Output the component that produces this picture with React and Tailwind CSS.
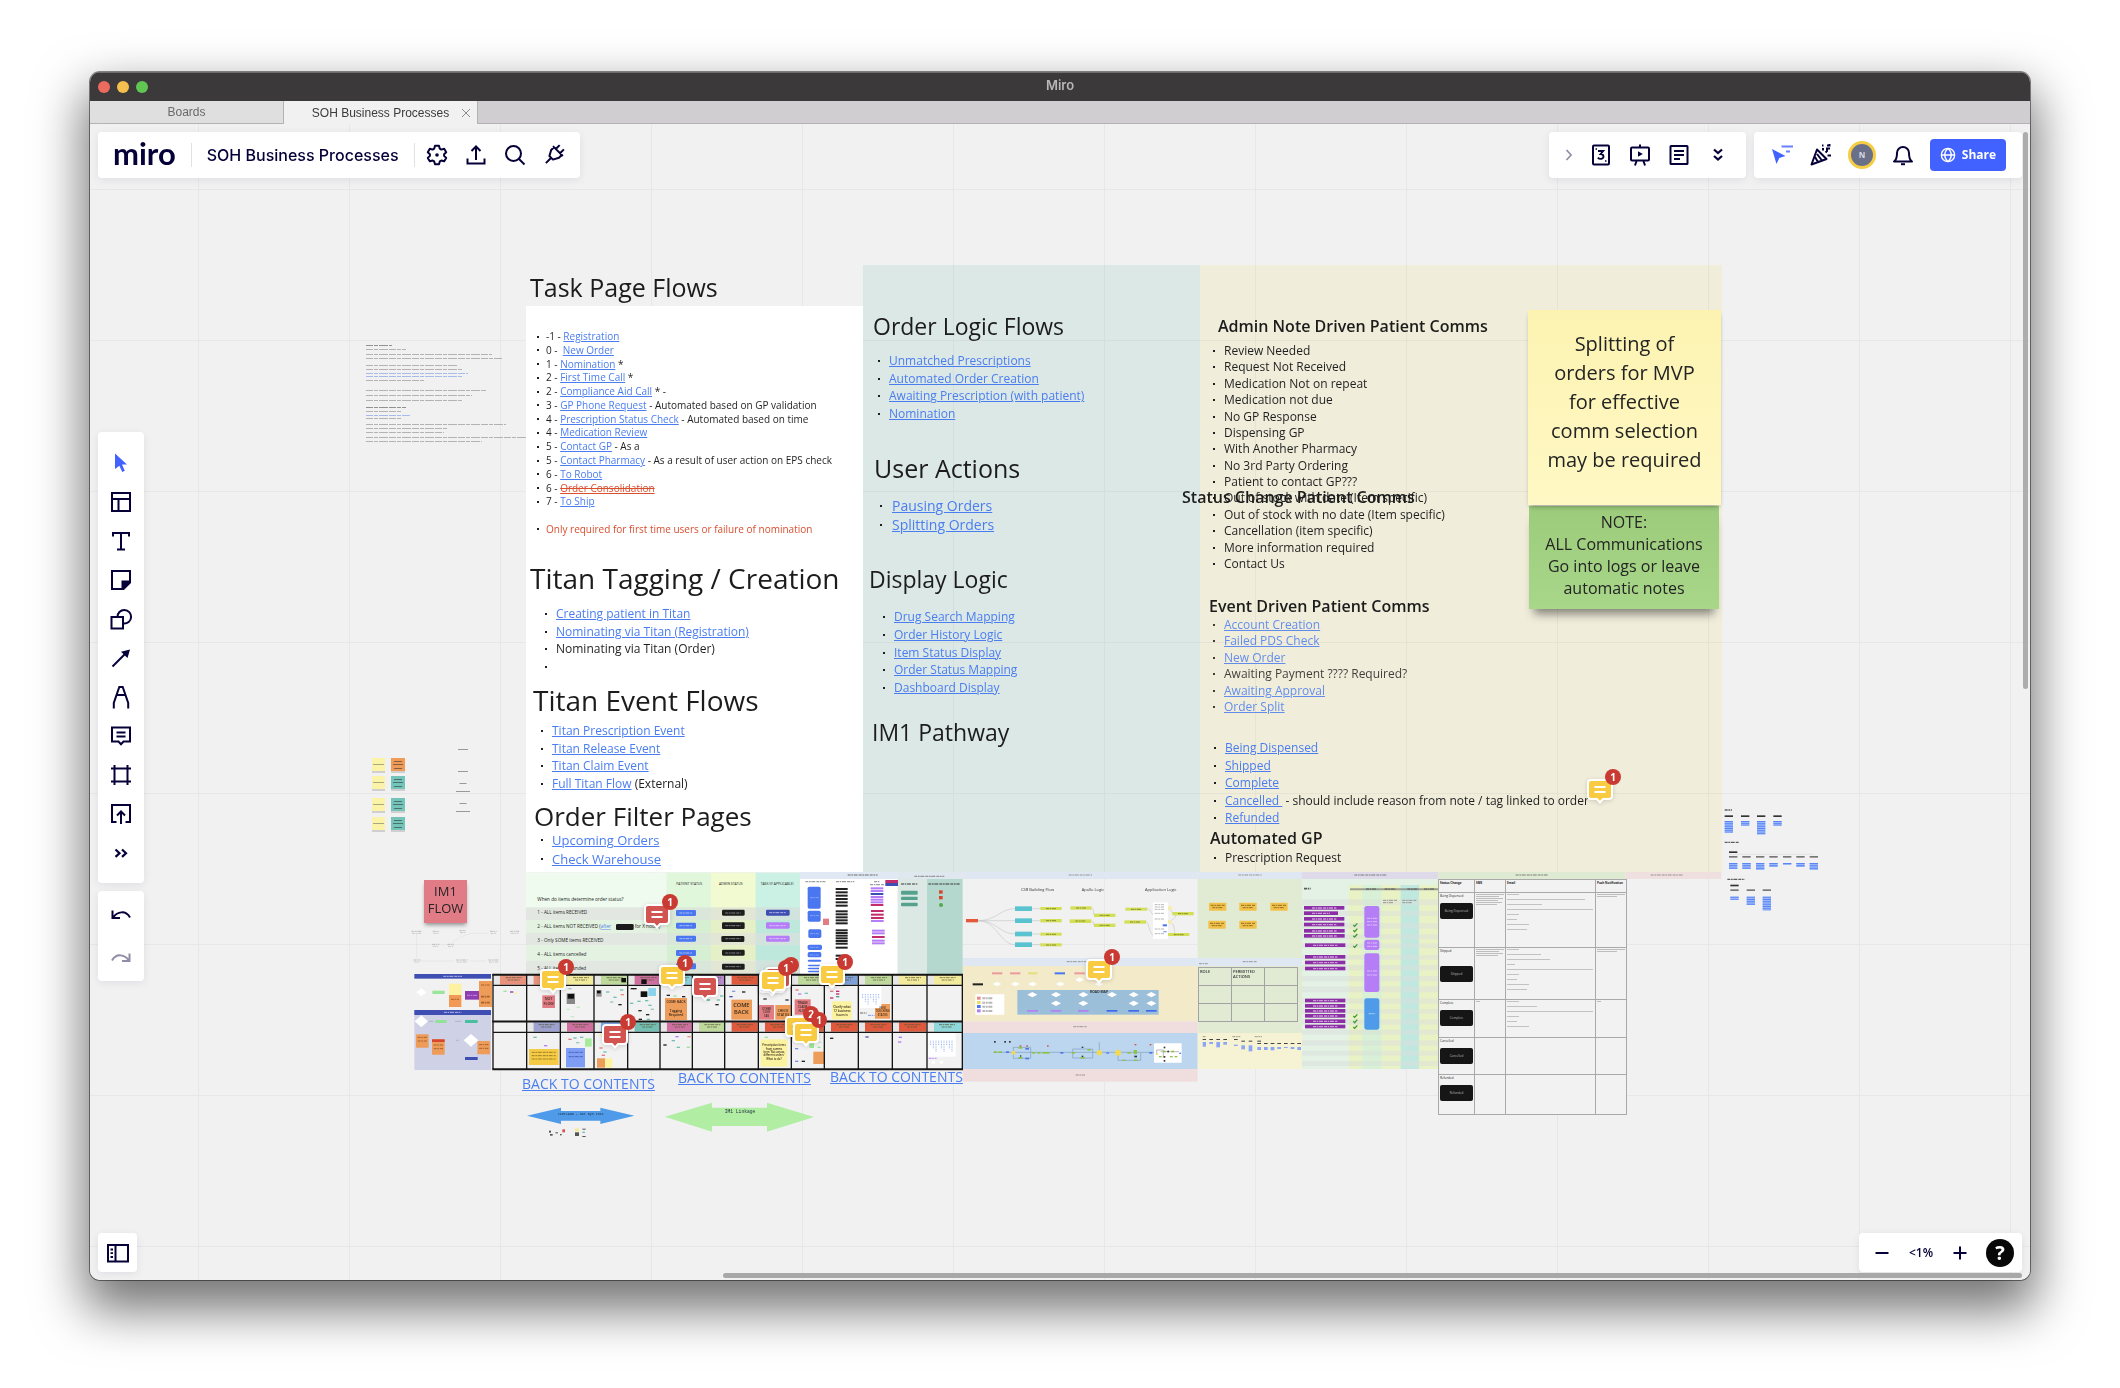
import React from "react";

/* Board space is measured from the top left of the screen; the canvas starts at ORIGIN. */
const ORIGIN = { x: 90, y: 124 };
const at = (x, y, w, h) => ({ left: x - ORIGIN.x, top: y - ORIGIN.y, width: w, height: h });

/* ---------- icons ---------- */
function Icon({ size = "size-6", children, ...rest }) {
  return (
    <svg viewBox="0 0 24 24" className={size} fill="none" stroke="currentColor" strokeWidth="2" aria-hidden="true" {...rest}>
      {children}
    </svg>
  );
}
const Gear = () => (
  <Icon>
    <path strokeLinejoin="round" d="M10 2.800h4l.8 2.900 1.500.9 2.900-.8 2 3.400-2.100 2v1.700l2.100 2-2 3.400-2.900-.8-1.500.9-.8 2.900h-4l-.8-2.900-1.500-.9-2.900.8-2-3.400 2.100-2v-1.700l-2.100-2 2-3.400 2.900.8 1.500-.9z" />
    <circle cx="12" cy="12" r="1.800" fill="currentColor" stroke="none" />
  </Icon>
);
const Export = () => (
  <Icon>
    <path d="M3.500 15.500v5h17v-5M12 17V4M7.500 8 12 3.500 16.500 8" />
  </Icon>
);
const Search = () => (
  <Icon>
    <circle cx="10.500" cy="10.500" r="7.500" />
    <path d="m16 16 5.500 5.500" />
  </Icon>
);
const Plug = () => (
  <Icon>
    <path transform="rotate(45 12 12)" d="M9 1v5.500M15 1v5.500M5 6.500h14M6.500 6.500v4l3 5.500h5l3-5.500v-4M12 16v7.500" strokeLinejoin="round" />
  </Icon>
);
const Chevron = () => (
  <Icon size="size-5"><path d="m9 6 5.500 6L9 18" /></Icon>
);
const Estimate = () => (
  <Icon>
    <rect x="4" y="2.500" width="16" height="19" rx="1" />
    <path strokeWidth="1.800" d="M9 8h5.200l-2.700 3.200c2 0 3 1 3 2.400 0 2.300-3.800 3.200-5.700 1" />
    <path strokeWidth="1.500" d="M6.500 6h1.500M16 18h1.500" />
  </Icon>
);
const Present = () => (
  <Icon>
    <rect x="3" y="4.500" width="18" height="13" rx="1" />
    <path d="M12 1.500v3M8.500 18 7 22.500M15.500 18l1.500 4.500" />
    <path d="m10 8.300 4.800 2.700L10 13.700z" fill="currentColor" stroke="none" />
  </Icon>
);
const Note = () => (
  <Icon>
    <rect x="3.500" y="3" width="17" height="18" rx=".5" />
    <path d="M7 8h10M7 12h10M7 16h6" />
  </Icon>
);
const DoubleDown = () => (
  <Icon><path strokeWidth="2.200" d="m8 6.500 4 3.500 4-3.500M8 13l4 3.500 4-3.500" /></Icon>
);
const CursorLines = () => (
  <Icon>
    <path d="m2 6 13.500 7-6.200 2L6.500 21z" fill="currentColor" stroke="none" />
    <path strokeWidth="1.800" opacity=".8" d="M11.500 3.500H23M16 8.500h4" />
  </Icon>
);
const Party = () => (
  <Icon>
    <path strokeLinejoin="round" d="M8 6.500 17.500 16 2.500 21.500zM8 11l5 6.500M6 14l3 5" />
    <path d="M14 7.500V5M16.500 9.500 18 8V5.500h3M18.500 12.500H22M18 2.500h2.500V1M13 2.500h1.500" />
  </Icon>
);
const Bell = () => (
  <Icon>
    <path strokeLinejoin="round" d="M3 18.500h18c-2.500-1.500-3-3.500-3-8.500a6 6 0 0 0-12 0c0 5-.5 7-3 8.500z" />
    <path d="M10 21.200h4" />
  </Icon>
);
const Globe = () => (
  <Icon size="size-[16px]">
    <circle cx="12" cy="12" r="10" />
    <path d="M2 12h20M12 2c-6.500 6-6.500 14 0 20M12 2c6.500 6 6.500 14 0 20" />
  </Icon>
);
const Cursor = () => (
  <Icon><path d="m6 2.500 12 11h-5l2.800 6.200-2.600 1.300-2.800-6.300-4.400 3.300z" fill="currentColor" stroke="none" /></Icon>
);
const Templates = () => (
  <Icon><path d="M3 3h18v18H3zM3 9h18M9.500 9v12" /></Icon>
);
const TextTool = () => (
  <Icon><path d="M4 7.500V4h16v3.500M12 4v16.500M8 20.500h8" /></Icon>
);
const Sticky = () => (
  <Icon>
    <path d="M3 3h18v10.500L14 21H3z" />
    <path d="M13.500 13.500H21v1L14.500 21h-1z" fill="currentColor" />
  </Icon>
);
const Shapes = () => (
  <Icon>
    <rect x="2.500" y="10" width="11.500" height="11.500" />
    <path d="M8.500 10a6.800 6.800 0 1 1 6 6.500" />
  </Icon>
);
const Arrow = () => (
  <Icon>
    <path d="M3.500 20.500 17 7" />
    <path d="M21 3.500 18.500 12 12 5.800z" fill="currentColor" stroke="none" />
  </Icon>
);
const Pen = () => (
  <Icon><path d="M4.800 23.500v-5.500L10.300 2h3.400l5.500 16v5.500M8 10h8" /></Icon>
);
const Comment = () => (
  <Icon><path d="M3 3.500h18v14h-6.500L12 20.200 9.500 17.500H3zM7.500 8.500h9M7.500 12.500h9" /></Icon>
);
const Frame = () => (
  <Icon><path d="M2 5.500h20M2 18.500h20M5.500 2v20M18.500 2v20" /></Icon>
);
const Upload = () => (
  <Icon><path d="M7.500 20H3V3h18v17h-4.500M12 22V10M8 13.500l4-4 4 4" /></Icon>
);
const More = () => (
  <Icon><path strokeWidth="2.200" d="m6.500 8.500 4 3.700-4 3.700M13 8.500l4 3.700-4 3.700" /></Icon>
);
const Undo = () => (
  <Icon>
    <path d="M3.500 7.500V15H11M4.500 14C8 9 16.500 6.500 21 14.500" />
  </Icon>
);
const Redo = () => (
  <Icon>
    <path d="M20.500 7.500V15H13M19.500 14C16 9 7.500 6.500 3 14.500" />
  </Icon>
);
const PanelIcon = () => (
  <Icon>
    <path d="M2 4h20v16.500H2zM9.500 4v16.500" />
    <path strokeWidth="1.800" d="M4.500 8.500h2.500M4.500 12.200h2.500M4.500 16h2.500" />
  </Icon>
);

function ToolButton({ label, className = "", children }) {
  return (
    <button type="button" aria-label={label} className={"flex items-center justify-center " + className}>
      {children}
    </button>
  );
}

/* ---------- board text ---------- */
const HEADINGS = [
  { text: "Task Page Flows", x: 530, y: 270, cls: "text-[25px]" },
  { text: "Titan Tagging / Creation", x: 530, y: 561, cls: "text-[28px]" },
  { text: "Titan Event Flows", x: 533, y: 683, cls: "text-[28px]" },
  { text: "Order Filter Pages", x: 534, y: 799, cls: "text-[26px]" },
  { text: "Order Logic Flows", x: 873, y: 309, cls: "text-[23px]" },
  { text: "User Actions", x: 874, y: 451, cls: "text-[25px]" },
  { text: "Display Logic", x: 869, y: 562, cls: "text-[23px]" },
  { text: "IM1 Pathway", x: 872, y: 715, cls: "text-[23px]" },
];
const SUBHEADINGS = [
  { text: "Admin Note Driven Patient Comms", x: 1218, y: 316 },
  { text: "Status Change Patient Comms", x: 1182, y: 487 },
  { text: "Event Driven Patient Comms", x: 1209, y: 596 },
  { text: "Automated GP", x: 1210, y: 828 },
];

const S10 = "text-[10px] leading-[13px]";
const S12 = "text-[12px] leading-[16px]";
/* Each row is [text before, link text, text after]; null leaves a blank row. */
const LISTS = [
  {
    x: 537, y: 330, h: 206, cls: S10, gap: "gap-[7px]",
    rows: [
      ["-1 - ", "Registration"], ["0 -  ", "New Order"], ["1 - ", "Nomination", " *"], ["2 - ", "First Time Call", " *"],
      ["2 - ", "Compliance Aid Call", " * -"], ["3 - ", "GP Phone Request", " - Automated based on GP validation"],
      ["4 - ", "Prescription Status Check", " - Automated based on time"], ["4 - ", "Medication Review"],
      ["5 - ", "Contact GP", " - As a"], ["5 - ", "Contact Pharmacy", " - As a result of user action on EPS check"],
      ["6 - ", "To Robot"], { struck: "Order Consolidation", before: "6 - " }, ["7 - ", "To Ship"], null,
      { warn: "Only required for first time users or failure of nomination" },
    ],
  },
  {
    x: 545, y: 606, h: 69, cls: S12, gap: "gap-[9px]",
    rows: [["", "Creating patient in Titan"], ["", "Nominating via Titan (Registration)"], ["Nominating via Titan (Order)"], [""]],
  },
  {
    x: 541, y: 723, h: 69, cls: S12, gap: "gap-[9px]",
    rows: [["", "Titan Prescription Event"], ["", "Titan Release Event"], ["", "Titan Claim Event"], ["", "Full Titan Flow", " (External)"]],
  },
  { x: 541, y: 831, h: 37, cls: "text-[13px] leading-[18px]", gap: "gap-[9px]", rows: [["", "Upcoming Orders"], ["", "Check Warehouse"]] },
  {
    x: 878, y: 353, h: 69, cls: S12, gap: "gap-[9px]",
    rows: [["", "Unmatched Prescriptions"], ["", "Automated Order Creation"], ["", "Awaiting Prescription (with patient)"], ["", "Nomination"]],
  },
  { x: 880, y: 496, h: 38, cls: "text-[14px] leading-[19px]", gap: "gap-[10px]", rows: [["", "Pausing Orders"], ["", "Splitting Orders"]] },
  {
    x: 883, y: 609, h: 87, cls: S12, gap: "gap-[9px]",
    rows: [["", "Drug Search Mapping"], ["", "Order History Logic"], ["", "Item Status Display"], ["", "Order Status Mapping"], ["", "Dashboard Display"]],
  },
  {
    x: 1213, y: 343, h: 229, cls: S12, gap: "gap-[9px]",
    rows: [
      ["Review Needed"], ["Request Not Received"], ["Medication Not on repeat"], ["Medication not due"], ["No GP Response"],
      ["Dispensing GP"], ["With Another Pharmacy"], ["No 3rd Party Ordering"], ["Patient to contact GP???"],
      ["Out of stock with date (Item specific)"], ["Out of stock with no date (Item specific)"],
      ["Cancellation (item specific)"], ["More information required"], ["Contact Us"],
    ],
  },
  {
    x: 1213, y: 617, h: 98, cls: S12, gap: "gap-[9px]", soft: true,
    rows: [["", "Account Creation"], ["", "Failed PDS Check"], ["", "New Order"], ["Awaiting Payment ???? Required?"], ["", "Awaiting Approval"], ["", "Order Split"]],
  },
  {
    x: 1214, y: 740, h: 86, cls: S12, gap: "gap-[9px]",
    rows: [["", "Being Dispensed"], ["", "Shipped"], ["", "Complete"], ["", "Cancelled ", " - should include reason from note / tag linked to order"], ["", "Refunded"]],
  },
  { x: 1214, y: 850, h: 16, cls: S12, gap: "gap-[9px]", rows: [["Prescription Request"]] },
];

function Row({ row }) {
  if (row.struck)
    return (
      <span>
        {row.before}
        <a href="#order-consolidation" className="text-[#da4f2e] underline decoration-1">
          <s>{row.struck}</s>
        </a>
      </span>
    );
  if (row.warn) return <span className="text-[#da4f2e]">{row.warn}</span>;
  return (
    <span>
      {row[0]}
      {row[1] && <a href="#link" className="text-[#4a7df0] underline decoration-1">{row[1]}</a>}
      {row[2]}
    </span>
  );
}

function BoardList({ list }) {
  return (
    <ul
      className={"absolute flex flex-col justify-between whitespace-pre text-[#1f1f1f] " + list.cls + (list.soft ? " opacity-85" : "")}
      style={{ ...at(list.x, list.y), height: list.h }}
    >
      {list.rows.map((row, i) =>
        row === null ? (
          <li key={i} aria-hidden="true">&nbsp;</li>
        ) : (
          <li key={i} className={"flex items-center " + list.gap}>
            <span className="size-[2px] shrink-0 bg-[#1f1f1f]" />
            <Row row={row} />
            {row[0] === "" && !row[1] ? <span>&nbsp;</span> : null}
          </li>
        )
      )}
    </ul>
  );
}

/* ---------- miniature drawings ---------- */
const R = (x, y, w, h, fill, rx = 0) => <rect key={x + "-" + y + fill} x={x} y={y} width={w} height={h} fill={fill} rx={rx} />;
const Bars = ({ items, fill, rx = 0 }) => items.map(([x, y, w, h], i) => <rect key={i} x={x} y={y} width={w} height={h} fill={fill} rx={rx} />);
/* Text too small to read, shown as a dotted stroke. */
const Scribble = ({ x, y, w, color = "#777", t = 3 }) => (
  <path d={"M" + x + " " + y + "h" + w} stroke={color} strokeWidth={t} strokeDasharray="9 2 5 2 12 3" opacity=".7" />
);
const Diamond = ({ x, y, w = 20, h = 18 }) => <path d={`M${x - w} ${y}L${x} ${y - h}L${x + w} ${y}L${x} ${y + h}z`} fill="#fff" />;

const COLS = [279, 380, 481, 582, 683, 780, 877, 974, 1075, 1174, 1273, 1375, 1477, 1581, 1687];
const TOP_HEADS = ["#e8917d", "#e8917d", "#f3eb9c", "#bfd99c", "#cf6fa0", "#8bd3dc", "#b78acb", "#e0593c", "#cf6fa0", "#bfd99c", "#7da0d8", "#bfd99c", "#f3eb9c", "#f3eb9c"];
const LOW_HEADS = [null, "#9ca1d0", "#cf6fa0", "#7fa4e8", "#74bfb4", "#cf6fa0", "#bfd99c", "#e0593c", "#e0593c", "#e0593c", "#e0593c", "#e0593c", "#e0593c", "#8ed8dc"];

function LeftMaps() {
  return (
    <g>
      {[[34, 217, 32], [98, 217, 20], [178, 215, 20], [270, 217, 20], [330, 217, 28], [96, 256, 22], [142, 256, 20], [40, 303, 22], [168, 303, 36], [265, 303, 32]].map(([x, y, w]) => (
        <g key={x + "" + y}>
          <Scribble x={x} y={y - 3} w={w} color="#aaa" />
          <Scribble x={x + 2} y={y + 3} w={w - 4} color="#bbb" />
        </g>
      ))}
      <path d="M50 222v78M60 303h100M210 303h50M155 250q20-20 60-30h50" stroke="#e2e2e2" strokeWidth="2" fill="none" />
      {R(43, 342, 230, 14, "#3f4eb3")}
      <Scribble x={130} y={349} w={56} color="#dfe3ff" />
      <Diamond x={64} y={397} w={15} h={12} />
      {R(97, 392, 37, 10, "#9be59a")}{R(147, 371, 37, 34, "#fdf2a2")}{R(147, 405, 37, 36, "#f29a55")}
      {R(195, 393, 43, 26, "#8e3db2")}{R(237, 363, 39, 78, "#ee9c5a")}
      <Scribble x={201} y={406} w={30} color="#d9a9ee" />
      <Scribble x={243} y={375} w={26} color="#8c4a1c" /><Scribble x={243} y={410} w={26} color="#8c4a1c" t={5} /><Scribble x={243} y={428} w={26} color="#8c4a1c" t={5} />
      <Scribble x={153} y={418} w={24} color="#8c4a1c" />
      {R(43, 450, 230, 180, "#cfd2e7")}{R(43, 450, 230, 15, "#3f4eb3")}
      <Scribble x={132} y={457} w={52} color="#dfe3ff" />
      <Diamond x={64} y={484} /><Diamond x={213} y={541} w={22} h={19} />
      {R(106, 480, 34, 9, "#93e09a")}{R(195, 480, 38, 9, "#49bfa0")}
      {R(48, 523, 38, 40, "#ee9c5a", 2)}{R(96, 538, 38, 46, "#ee9c5a", 2)}{R(96, 538, 38, 8, "#d8452f")}{R(232, 543, 38, 40, "#ee9c5a", 2)}
      {[[53, 532], [53, 543], [101, 555], [101, 566], [237, 554], [237, 565]].map(([x, y]) => <Scribble key={x + "" + y} x={x} y={y} w={28} color="#8c4a1c" />)}
      {R(195, 591, 38, 9, "#3f4eb3")}
      <path d="M86 484h14M165 484h20M168 541h8" stroke="#9aa" strokeWidth="2" />
    </g>
  );
}

function StatusTable() {
  const rows = [142, 180, 219, 256, 302];
  const hs = [38, 39, 37, 46, 40];
  return (
    <g>
      {R(378, 38, 422, 304, "#eefbee")}{R(800, 38, 133, 304, "#e0f7dc")}{R(933, 38, 135, 304, "#f1fad0")}{R(1067, 38, 134, 304, "#caf1e4")}
      {rows.map((y, i) => (
        <g key={y}>
          {R(378, y, 422, hs[i], i % 2 ? "#e4f2e2" : "#e2e8e1")}
          {R(800, y, 133, hs[i], i % 2 ? "#d6efd3" : "#dbe6da")}
          {R(933, y, 135, hs[i], i % 2 ? "#e6f0c6" : "#e2e7d5")}
          {R(1067, y, 134, hs[i], i % 2 ? "#bfe8dc" : "#d2e3de")}
        </g>
      ))}
      <g fontFamily="Open Sans, sans-serif" fontSize="14" fill="#222">
        <text x="412" y="122">When do items determine order status?</text>
        <text x="412" y="163">1 - ALL items RECEIVED</text>
        <text x="412" y="205">2 - ALL items NOT RECEIVED (<tspan fill="#4a7df0" textDecoration="underline">after</tspan></text>
        <text x="704" y="205">for X hours)</text>
        <text x="412" y="247">3 - Only SOME items RECEIVED</text>
        <text x="412" y="289">4 - ALL items cancelled</text>
        <text x="412" y="330">5 - ALL items refunded</text>
        <text x="829" y="74" fontSize="10">PATIENT STATUS</text>
        <text x="957" y="74" fontSize="10">ADMIN STATUS</text>
        <text x="1082" y="74" fontSize="10">TASK (IF APPLICABLE)</text>
      </g>
      {R(648, 192, 53, 18, "#1b1b1b", 4)}
      <Bars rx={4} fill="#4a76f0" items={[[828, 150, 60, 18], [828, 188, 60, 18], [828, 227, 60, 18], [828, 270, 60, 18], [828, 310, 60, 18]]} />
      <Bars rx={4} fill="#1d1d1d" items={[[966, 149, 68, 18], [966, 187, 68, 20], [964, 228, 69, 18], [966, 269, 68, 18], [966, 311, 68, 18]]} />
      {R(1098, 149, 71, 18, "#3f4eb3", 4)}{R(1098, 187, 71, 19, "#b57df6", 4)}{R(1098, 227, 71, 18, "#b57df6", 4)}
      {[159, 197, 236, 279, 320].map((y) => (
        <g key={y}><Scribble x={838} y={y} w={38} color="#cfdcff" /><Scribble x={976} y={y} w={46} color="#aaa" /></g>
      ))}
      {[158, 197, 236].map((y) => <Scribble key={y} x={1108} y={y} w={50} color="#ecdcff" />)}
    </g>
  );
}

const seq = (a, b, s) => Array.from({ length: Math.floor((b - a) / s) + 1 }, (_, i) => a + i * s);

function OrderMapping() {
  return (
    <g transform="translate(840 0)">
      {R(360, 38, 293, 304, "#ffffff")}{R(360, 36, 293, 21, "#dfe8f3")}
      {R(653, 38, 88, 304, "#dbe8e3")}{R(741, 57, 107, 285, "#b4d8cd")}{R(653, 36, 195, 21, "#dfe8ee")}
      <Scribble x={503} y={45} w={90} t={4} /><Scribble x={703} y={49} w={90} t={4} />
      <Scribble x={376} y={65} w={60} t={4} /><Scribble x={468} y={65} w={55} t={4} /><Scribble x={582} y={65} w={18} t={4} /><Scribble x={570} y={74} w={42} t={4} />
      <Scribble x={663} y={72} w={50} t={5} color="#444" /><Scribble x={745} y={72} w={94} t={5} color="#444" />
      {R(616, 60, 38, 9, "#c22c6c")}{R(616, 69, 38, 9, "#3f4eb3")}
      <Bars rx={5} fill="#4a76f0" items={[[383, 80, 39, 66], [383, 152, 39, 33], [385, 208, 39, 26], [383, 254, 43, 16], [383, 276, 41, 16], [383, 299, 41, 6], [383, 314, 41, 5], [383, 323, 41, 5], [383, 332, 41, 5]]} />
      {[113, 167, 221, 262, 285].map((y) => <Scribble key={y} x={390} y={y} w={26} color="#9db5ff" />)}
      {R(429, 176, 18, 19, "#e17b84")}
      <Bars fill="#222" items={[...seq(84, 134, 10), 151, 160, 169, 178, 187, ...seq(208, 248, 8), 260, 284, 294].map((y) => [467, y, 36, 6])} />
      {[[572, 82, "#b57df6"], [572, 90, "#b57df6"], [572, 99, "#3f4eb3"], [572, 108, "#b57df6"], [572, 116, "#b57df6"], [572, 124, "#b57df6"], [572, 132, "#c22c6c"], [573, 150, "#c22c6c"], [573, 161, "#c22c6c"], [573, 171, "#c22c6c"], [573, 180, "#b57df6"], [576, 209, "#b57df6"], [576, 217, "#b57df6"], [576, 228, "#c22c6c"], [576, 239, "#b57df6"], [576, 247, "#b57df6"]].map(([x, y, c]) => R(x, y, 38, 6, c))}
      <Bars rx={3} fill="#57a28f" items={[[663, 92, 50, 12], [663, 110, 50, 10], [663, 128, 50, 11]]} />
      {R(777, 91, 11, 10, "#d8452f")}{R(777, 108, 11, 10, "#d8452f")}<circle cx="783" cy="135" r="6" fill="#54a84e" />
    </g>
  );
}

function StoryGrid() {
  return (
    <g>
      {R(279, 343, 1408, 285, "#f2f2f2")}
      {TOP_HEADS.map((c, i) => (
        <g key={i}>
          {R(COLS[i] + 20, 345, COLS[i + 1] - COLS[i] - 22, 29, c)}
          {R(COLS[i] + 2, 345, 18, 29, "#e6e6e6")}
          <Scribble x={COLS[i] + 38} y={353} w={48} color="#553" /><Scribble x={COLS[i] + 44} y={360} w={36} color="#553" />
        </g>
      ))}
      {LOW_HEADS.map((c, i) =>
        c ? (
          <g key={i}>
            {R(COLS[i] + 20, 487, COLS[i + 1] - COLS[i] - 22, 28, c)}
            {R(COLS[i] + 2, 487, 18, 28, "#e6e6e6")}
            <Scribble x={COLS[i] + 36} y={494} w={48} color="#553" /><Scribble x={COLS[i] + 44} y={501} w={30} color="#553" />
          </g>
        ) : null
      )}
      {/* small diagrams inside each cell */}
      {[[310, 392, "#9be59a"], [330, 394, "#8e3db2"], [342, 397, "#fdf2a2"], [500, 446, "#c8e8c8"], [530, 440, "#c8e8c8"], [505, 384, "#9ec6c0"], [512, 468, "#c8e8c8"], [618, 394, "#74bfb4"], [640, 410, "#74bfb4"], [660, 388, "#74bfb4"], [662, 402, "#e8917d"], [630, 424, "#9ec6c0"], [655, 432, "#222"], [692, 384, "#222"], [700, 384, "#222"], [690, 428, "#74bfb4"], [712, 422, "#74bfb4"], [735, 420, "#74bfb4"], [745, 434, "#74bfb4"], [715, 450, "#222"], [738, 462, "#222"], [752, 446, "#9ec6c0"], [716, 476, "#222"], [740, 476, "#74bfb4"], [800, 404, "#222"], [820, 406, "#9be59a"], [846, 408, "#222"], [920, 418, "#49a77e"], [950, 418, "#74bfb4"], [946, 432, "#222"], [960, 406, "#74bfb4"], [988, 408, "#3f4eb3"], [996, 392, "#8aa0dd"], [1026, 394, "#222"], [1090, 415, "#333"], [1156, 418, "#333"], [1186, 388, "#e17b84"], [1194, 400, "#b57df6"], [1214, 398, "#7dc4b8"], [1290, 392, "#e17b84"], [1308, 392, "#c22c6c"], [1308, 400, "#c22c6c"], [1308, 408, "#4aa08f"], [1290, 412, "#c22c6c"], [400, 530, "#74bfb4"], [432, 555, "#b57df6"], [505, 536, "#e17b84"], [520, 532, "#74bfb4"], [540, 530, "#74bfb4"], [528, 546, "#9ec6c0"], [596, 524, "#fdf2a2"], [598, 562, "#e17b84"], [610, 574, "#74bfb4"], [605, 584, "#e17b84"], [790, 553, "#222"], [815, 540, "#74bfb4"], [826, 528, "#b57df6"], [830, 560, "#74bfb4"], [862, 528, "#e8917d"], [860, 560, "#9be59a"], [1094, 530, "#9be59a"], [1290, 533, "#222"], [1396, 529, "#55a"], [1496, 530, "#b57df6"], [1494, 544, "#b57df6"], [1185, 564, "#7b8fe0"], [1185, 602, "#7b8fe0"], [1205, 602, "#222"], [1252, 560, "#9be59a"], [1255, 545, "#c8e8c8"]].map(([x, y, c]) => R(x, y, 10, 4, c))}
      {R(427, 406, 38, 38, "#e17b84")}{R(500, 400, 25, 32, "#888")}{R(503, 402, 19, 14, "#111")}{R(589, 390, 16, 20, "#999")}{R(591, 392, 11, 8, "#111")}
      {R(722, 394, 20, 17, "#111")}{R(745, 384, 23, 24, "#8bd3ea")}{R(664, 354, 14, 13, "#111")}{R(724, 358, 16, 14, "#111")}
      {R(795, 414, 66, 66, "#ee9c5a")}{R(994, 419, 62, 60, "#ee9c5a")}{R(1077, 435, 45, 44, "#e17b84")}{R(1126, 435, 46, 44, "#ee9c5a")}
      {R(1184, 418, 48, 46, "#e17b84")}{R(1296, 424, 59, 54, "#fbf3a0")}{R(1425, 432, 45, 44, "#ee9c5a")}
      {R(387, 567, 89, 48, "#f5cb46")}{R(498, 564, 57, 58, "#7f9df4")}{R(555, 535, 20, 25, "#a6eb9c")}{R(591, 595, 24, 28, "#ee9c5a")}{R(615, 595, 22, 28, "#fbf3a0")}
      {R(1082, 538, 80, 82, "#fbf3a0")}{R(1240, 575, 32, 37, "#ee9c5a")}{R(1228, 550, 14, 14, "#9be59a")}
      {R(1380, 378, 64, 66, "#fff")}{R(1583, 520, 84, 70, "#fff")}
      {seq(1388, 1436, 8).map((x, i) => <path key={x} d={`M${x} 402v${14 + (i % 3) * 9}`} stroke="#9bb5ee" strokeWidth="3" strokeDasharray="3 2" />)}
      {seq(1592, 1656, 8).map((x, i) => <path key={x} d={`M${x} 542v${14 + (i % 3) * 10}`} stroke="#9bb5ee" strokeWidth="3" strokeDasharray="3 2" />)}
      <Scribble x={1380} y={459} w={20} color="#333" /><Scribble x={1404} y={466} w={20} color="#4a76f0" /><Scribble x={1586} y={595} w={24} color="#b57df6" t={4} />
      <Diamond x={1600} y={607} w={7} h={6} /><Diamond x={1624} y={607} w={7} h={6} />
      <g fontFamily="Open Sans, sans-serif" fontWeight="600" textAnchor="middle" fill="#3a2a1a">
        <text x="446" y="420" fontSize="11">NOT</text><text x="446" y="435" fontSize="11">FLOW</text>
        <text x="828" y="430" fontSize="10">COME BACK</text><text x="828" y="456" fontSize="10">Tagging</text><text x="828" y="468" fontSize="10">Required</text>
        <text x="1024" y="442" fontSize="17">COME</text><text x="1024" y="463" fontSize="17">BACK</text>
        <text x="1100" y="449" fontSize="8">OTHER</text><text x="1100" y="460" fontSize="8">CLICK</text><text x="1100" y="471" fontSize="8">TAG</text>
        <text x="1149" y="455" fontSize="10">CHECK</text><text x="1149" y="468" fontSize="10">STATUS</text>
        <text x="1208" y="431" fontSize="9">TRIAGE</text><text x="1208" y="444" fontSize="9">CLAIM</text><text x="1208" y="457" fontSize="9">FLOW</text>
        <text x="1326" y="443" fontSize="9">Clarify what</text><text x="1326" y="455" fontSize="9">12 business</text><text x="1326" y="467" fontSize="9">hours is</text>
        <text x="1448" y="446" fontSize="8">FEED</text><text x="1448" y="457" fontSize="8">TOUCHING</text><text x="1448" y="468" fontSize="8">STATUS</text>
        <text x="1122" y="559" fontSize="8">Prescription items</text><text x="1122" y="569" fontSize="8">from comms</text><text x="1122" y="579" fontSize="8">item 'Not across</text><text x="1122" y="589" fontSize="8">different orders'</text><text x="1122" y="601" fontSize="8">What to do?</text>
      </g>
      {[577, 587, 597].map((y) => <Scribble key={y} x={395} y={y} w={72} color="#7a6112" />)}
      {[577, 590].map((y) => <Scribble key={y} x={506} y={y} w={42} color="#34479d" />)}
      <g stroke="#151515" fill="none">
        {COLS.map((x) => <path key={x} d={`M${x} 343V628`} strokeWidth="4" />)}
        <path d="M277 344H1689M277 484.500H1689" strokeWidth="6" />
        <path d="M279 376H1687M279 517H1687" strokeWidth="4" />
        <path d="M277 628H1689" strokeWidth="6" />
      </g>
    </g>
  );
}

function CentreFlows() {
  const lime = [[271, 141, 64, 9], [271, 177, 64, 10], [271, 218, 64, 9], [271, 250, 64, 9], [361, 139, 64, 10], [359, 178, 65, 11], [432, 161, 64, 10], [432, 191, 64, 10], [526, 143, 65, 9], [523, 181, 65, 10], [667, 156, 64, 10], [654, 219, 64, 9]];
  return (
    <g transform="translate(1650 0)">
      {R(38, 36, 705, 21, "#dfe8f2")}{R(38, 294, 705, 24, "#dfe8f2")}{R(38, 318, 705, 166, "#f3eaca")}{R(38, 484, 705, 35, "#efdedd")}{R(38, 519, 705, 108, "#bcd6ef")}{R(38, 627, 705, 38, "#efdedd")}
      <Scribble x={356} y={45} w={70} /><Scribble x={350} y={305} w={60} /><Scribble x={370} y={500} w={40} /><Scribble x={377} y={645} w={28} />
      <g fontFamily="Open Sans, sans-serif" fontSize="12" fill="#333">
        <text x="213" y="92">CSR Building Flow</text><text x="395" y="92">Apollo Logic</text><text x="585" y="92">Application Logic</text>
      </g>
      <g stroke="#c9c9c9" strokeWidth="2" fill="none">
        <path d="M84 182H195M84 182C140 182 150 146 195 146M84 182C140 182 150 222 195 222M84 182C140 182 150 254 195 254M246 146h25M246 182h25M246 222h25M246 254h25M425 144q6 0 6 20M425 183q6 0 6 12M591 147c14 0 14 20 22 20M588 185c10 0 10 50 28 40M654 185c30-10 26-25 14-25M654 147q10 0 14 12M654 185q20 0 20 34" />
      </g>
      {R(48, 177, 36, 10, "#e5583a")}<Bars fill="#5ac3cf" items={[[195, 139, 51, 14], [195, 175, 51, 14], [195, 215, 51, 14], [195, 247, 51, 14]]} />
      <Bars fill="#d4df58" items={lime} />
      {lime.map(([x, y]) => <Scribble key={x + "" + y} x={x + 17} y={y + 5} w={30} color="#66701c" />)}
      {R(609, 127, 45, 110, "#fff")}{[134, 141, 148, 160, 177, 207, 221].map((y) => <Scribble key={y} x={614} y={y} w={28} color="#999" />)}
      {R(638, 193, 13, 6, "#4a76f0")}{R(640, 213, 10, 4, "#8aa6ff")}{R(655, 138, 10, 12, "#f7efa8")}{R(655, 180, 9, 12, "#f7efa8")}
      <Bars fill="#ea9b9b" items={[[126, 337, 31, 6], [180, 337, 31, 6], [373, 337, 31, 6]]} />{R(234, 337, 28, 6, "#e5df79")}{R(314, 337, 31, 6, "#4a76f0")}{R(68, 370, 31, 6, "#222")}
      {[[141, 372], [196, 372], [248, 372], [331, 372], [389, 359], [447, 372]].map(([x, y]) => <Diamond key={x} x={x} y={y} w={13} h={7} />)}
      {R(76, 403, 87, 61, "#fff", 3)}
      {[["#e88a8a", 410], ["#e9dd68", 423], ["#4a76f0", 435], ["#b57df6", 448]].map(([c, y]) => <g key={c}>{R(81, y, 11, 9, c)}<Scribble x={97} y={y + 5} w={30} t={6} color="#999" /></g>)}
      {R(202, 390, 424, 74, "#9cbfd9")}
      <text x="420" y="399" fontFamily="Open Sans, sans-serif" fontWeight="700" fontSize="10" fill="#333">ROAD MAP</text>
      {[[247, 404], [318, 404], [400, 404], [486, 404], [551, 404], [604, 404], [318, 430], [400, 430], [551, 430], [604, 430]].map(([x, y]) => <Diamond key={x + "" + y} x={x} y={y} w={15} h={8} />)}
      <Bars fill="#b57df6" items={[[231, 450, 33, 5], [302, 450, 32, 5], [384, 450, 32, 5]]} /><Bars fill="#3f68ee" items={[[470, 450, 32, 5], [535, 450, 32, 5], [588, 450, 32, 5]]} />
      <path d="M130 577H615M190 577v-15h52v33h-52zM368 579v-12h60v27h-60zM504 579v22h68v-22M448 547v30" stroke="#7f9fc0" strokeWidth="2" fill="none" />
      <Bars fill="#8bc34a" items={[[131, 574, 10, 5], [146, 574, 10, 5], [205, 561, 12, 5], [205, 591, 12, 5], [246, 576, 10, 5], [262, 576, 10, 5], [277, 576, 22, 5], [365, 576, 10, 5], [412, 567, 10, 5], [392, 591, 12, 5], [532, 576, 10, 5], [551, 570, 10, 12], [551, 599, 12, 4], [518, 599, 9, 4]]} />
      <Bars fill="#4a76f0" items={[[168, 574, 9, 5], [226, 564, 11, 5], [226, 593, 11, 5], [331, 576, 9, 5], [469, 577, 8, 4], [598, 576, 9, 5]]} />
      <Bars fill="#333" items={[[132, 543, 5, 5], [163, 543, 5, 5], [177, 543, 5, 5], [210, 586, 4, 4], [395, 560, 5, 4], [395, 587, 5, 4], [553, 587, 8, 5]]} />
      <Bars fill="#c0563e" items={[[209, 556, 5, 4], [229, 556, 5, 4], [291, 556, 5, 4], [554, 552, 5, 4], [599, 552, 5, 4]]} />
      {[[190, 6], [448, 8], [504, 9]].map(([x, r]) => <circle key={x} cx={x} cy="578" r={r} fill="#f3d951" />)}
      {R(612, 550, 83, 58, "#fff", 2)}
      <path d="M620 583v-13h20v24M632 575h55" stroke="#999" strokeWidth="2" fill="none" />
      <Bars fill="#8bc34a" items={[[627, 588, 8, 4], [660, 588, 8, 4], [674, 588, 8, 4], [640, 572, 7, 5], [664, 572, 8, 5]]} />
      <Bars fill="#333" items={[[641, 560, 5, 5], [641, 588, 5, 5], [652, 572, 5, 5], [641, 600, 5, 5]]} />{R(618, 580, 5, 5, "#f3d951")}{R(688, 578, 5, 4, "#4a76f0")}
    </g>
  );
}

function RightFlows() {
  const purple = [[342, 138, 121], [342, 154, 102], [342, 171, 121], [342, 188, 121], [342, 207, 122], [342, 222, 122], [345, 250, 121], [345, 285, 121], [345, 302, 121], [345, 320, 121], [345, 416, 121], [345, 432, 121], [345, 447, 121], [345, 462, 121], [345, 478, 121], [345, 494, 121]];
  const bands = [[118, 18], [153, 15], [189, 17], [223, 15], [250, 15], [285, 14], [315, 16], [348, 16], [379, 18], [415, 16], [447, 14], [478, 16], [509, 15], [541, 16], [572, 15], [603, 15]];
  return (
    <g transform="translate(2370 0)">
      {R(23, 36, 313, 21, "#dfe8f2")}{R(336, 36, 409, 21, "#dfdaea")}{R(745, 36, 561, 21, "#dfead2")}{R(1306, 36, 288, 21, "#f0dfdf")}
      {R(23, 57, 313, 237, "#e1ebd4")}{R(23, 294, 313, 24, "#dfe8f2")}{R(23, 318, 313, 201, "#e1ebd4")}{R(23, 519, 313, 108, "#f6f3d4")}
      <Scribble x={145} y={45} w={70} /><Scribble x={493} y={45} w={96} color="#555" /><Scribble x={977} y={45} w={98} color="#555" /><Scribble x={1382} y={45} w={96} /><Scribble x={158} y={305} w={44} /><Scribble x={27} y={311} w={26} />
      {[[57, 128], [148, 128], [241, 128], [55, 182], [148, 182]].map(([x, y]) => (
        <g key={x + "" + y}>{R(x, y, 52, 24, "#f2c14a", 2)}<Scribble x={x + 5} y={y + 8} w={42} color="#6b4f10" /><Scribble x={x + 10} y={y + 15} w={30} color="#6b4f10" /></g>
      ))}
      {R(336, 57, 409, 570, "#e4f2e5")}
      {R(476, 75, 41, 552, "#e9f2c4")}{R(517, 75, 58, 552, "#d8f1d6")}{R(575, 75, 57, 552, "#e9f2c4")}{R(632, 75, 56, 552, "#c1e8df")}{R(688, 75, 57, 552, "#e9f2c4")}
      {bands.map(([y, h]) => <g key={y} opacity=".8">{R(336, y, 140, h, "#dfe6df")}{R(476, y, 41, h, "#e0e5d2")}{R(517, y, 58, h, "#d9e6d8")}{R(575, y, 57, h, "#e2e6d4")}{R(632, y, 56, h, "#cfe2de")}{R(688, y, 57, h, "#e2e6d4")}</g>)}
      <path d="M480 87.500H836" stroke="#8a8a86" strokeWidth="6" opacity=".8" />
      <Scribble x={342} y={86} w={20} color="#222" t={5} />{[528, 584, 652, 702, 747].map((x) => <Scribble key={x} x={x} y={87} w={34} color="#333" />)}
      <Scribble x={579} y={121} w={42} /><Scribble x={579} y={128} w={30} /><Scribble x={637} y={121} w={42} /><Scribble x={637} y={128} w={28} />
      {purple.map(([x, y, w]) => <g key={y}>{R(x, y, w, 11, "#8c2fa6")}<Scribble x={x + 24} y={y + 6} w={w - 48} color="#e6c8f2" t={4} /></g>)}
      {R(523, 138, 45, 95, "#b57df6", 7)}{R(523, 239, 45, 31, "#b57df6", 7)}{R(523, 280, 45, 116, "#b57df6", 7)}{R(523, 415, 45, 94, "#4f9be9", 7)}
      {[175, 185, 195, 249, 259, 333, 345].map((y) => <Scribble key={y} x={531} y={y} w={30} color="#ecdcff" />)}<Scribble x={536} y={461} w={20} color="#d5e7fb" />
      {[194, 210, 226, 257, 467, 483, 500].map((y) => <path key={y} d={`M490 ${y + 1}l4 4 8-9`} fill="none" stroke="#3f9a35" strokeWidth="4" />)}
      <Bars fill="#444" items={[[38, 537, 10, 3], [58, 537, 11, 3], [79, 537, 11, 3], [100, 537, 11, 3], [132, 537, 11, 3], [154, 542, 11, 3], [176, 542, 11, 3], ...seq(202, 325, 20).map((x) => [x, 549, 11, 3]), [202, 542, 11, 3]]} />
      <Bars fill="#8aa6f5" items={[[38, 546, 10, 14], [58, 546, 11, 6], [79, 546, 11, 16], [100, 546, 11, 8], [132, 554, 11, 4], [154, 556, 11, 12], [176, 556, 11, 18], [202, 561, 11, 9], [222, 561, 11, 9], [242, 561, 11, 10], [262, 561, 11, 6], [282, 561, 11, 3], [302, 561, 11, 6], [322, 561, 11, 9]]} />
      <Scribble x={38} y={530} w={10} /><Scribble x={127} y={530} w={24} /><Scribble x={194} y={530} w={22} />
    </g>
  );
}

function FlowMap() {
  return (
    <svg className="absolute" style={at(400, 860, 1331, 290)} viewBox="0 0 3993 870" aria-label="Flow diagrams">
      <LeftMaps />
      <StatusTable />
      <OrderMapping />
      <CentreFlows />
      <RightFlows />
      <StoryGrid />
      <path d="M381 767 483 743v10H601v-10l102 24-102 25v-10H483v10z" fill="#4f9be9" />
      <path d="M794 770 936 728v15h165v-15l141 43-141 44v-17H936v17z" fill="#b1eea4" />
      <g fontFamily="Liberation Mono, monospace" fill="#1d2a3a" textAnchor="middle">
        <text x="542" y="764" fontSize="10">SCOTLAND - Not Dyn Inst</text>
        <text x="1020" y="759" fontSize="14">IM1 Linkage</text>
      </g>
      <Bars fill="#555" items={[[447, 812, 6, 6], [450, 822, 8, 5], [466, 817, 8, 3], [480, 822, 5, 4], [525, 817, 12, 11], [547, 806, 10, 3], [547, 828, 10, 3]]} />
      {R(487, 808, 8, 9, "#d9534f")}{R(525, 805, 12, 10, "#f3eb9c")}{R(547, 815, 8, 4, "#74bfb4")}
    </svg>
  );
}

function SideNotes() {
  const lines = [[345, 26, 1], [349, 40], [354, 126], [358, 136], [365, 92], [369, 96], [373, 102, 2], [376, 96, 2], [380, 58], [390, 120], [395, 106], [400, 96], [407, 40, 1], [411, 36], [415, 44, 2], [418, 36], [424, 140], [428, 82], [432, 78], [437, 160], [441, 116]];
  return (
    <svg className="absolute" style={at(360, 340, 170, 500)} viewBox="360 340 170 500" aria-hidden="true">
      {lines.map(([y, w, k], i) => (
        <path key={i} d={`M366 ${y}.5h${w}`} stroke={k === 2 ? "#5f86e8" : k === 1 ? "#333" : "#777"} strokeWidth="1" strokeDasharray="7 1 4 1 9 1" opacity=".5" />
      ))}
      {[758, 776, 798, 817].map((y, i) => (
        <g key={y}>
          <rect x="372" y={y + 1} width="13" height="14" fill="#000" opacity=".14" />
          <rect x="391" y={y + 1} width="14" height="14" fill="#000" opacity=".14" />
          <rect x="372" y={y} width="13" height="13" fill="#fbf3a8" />
          <rect x="391" y={y} width="14" height="13" fill={i ? "#74c4b9" : "#f09c59"} />
          <path d={`M373 ${y + 6}.5h11`} stroke="#776" strokeWidth="1" opacity=".6" />
          <path d={`M394 ${y + 3}.5h8M393 ${y + 6}.5h10M394 ${y + 10}.5h8`} stroke="#222" strokeWidth="1" opacity=".5" />
        </g>
      ))}
      {[[749, 10], [771, 10], [783, 7], [791, 14], [803, 7], [811, 14]].map(([y, w]) => (
        <path key={y} d={`M${463 - w / 2} ${y}.5h${w}`} stroke="#444" strokeWidth="1" opacity=".5" />
      ))}
    </svg>
  );
}

function ViewMaps() {
  const dark = [[254, 108], [303, 108], [351, 108], [400, 108], [267, 216], [271, 316]];
  const grey = [...[267, 307, 348, 388, 429, 469, 509].map((x) => [x, 230]), [271, 330], [320, 330], [368, 330]];
  const blue = [[254, 123, 36], [303, 123, 15], [351, 123, 41], [400, 123, 15], [267, 249, 18], [307, 249, 18], [348, 249, 21], [388, 249, 12], [429, 249, 6], [469, 249, 12], [509, 249, 21], [271, 350, 9], [320, 350, 25], [368, 350, 42]];
  return (
    <svg className="absolute" style={at(1720, 800, 110, 120)} viewBox="240 60 330 360" aria-hidden="true">
      <Scribble x={254} y={90} w={22} color="#222" t={4} /><Scribble x={254} y={187} w={44} color="#222" t={4} /><Scribble x={262} y={298} w={52} color="#222" t={4} />
      <path d="M267 223H520" stroke="#ddd" strokeWidth="2" />
      {dark.map(([x, y]) => R(x, y - 2, 25, 5, "#333"))}
      {grey.map(([x, y]) => R(x, y - 2, 25, 5, "#777"))}
      {blue.map(([x, y, h], i) => (
        <g key={i}>
          <rect x={x} y={y} width="25" height={h} fill="#9ab6fb" />
          <path d={`M${x + 12.5} ${y}v${h}`} stroke="#5b85f2" strokeWidth="25" strokeDasharray="3 4" />
        </g>
      ))}
    </svg>
  );
}

const STATUS_ROWS = [
  { name: "Being Dispensed", h: "h-[55px]", sms: 6, email: [12, 78, 35, 86, 12, 10, 22, 20], push: 2 },
  { name: "Shipped", h: "h-[52px]", sms: 4, email: [12, 34, 43, 8, 86, 12, 10, 22, 20], push: 2 },
  { name: "Complete", h: "h-[38px]", sms: 1, email: [12, 30, 86, 12, 10, 22], push: 1 },
  { name: "Cancelled", h: "h-[37px]", sms: 0, email: [], push: 0 },
  { name: "Refunded", h: "h-[40px]", sms: 0, email: [], push: 0 },
];
function StatusComms() {
  const cell = "border border-[#a9a9a9] p-px align-top text-left";
  return (
    <table className="absolute table-fixed border-collapse bg-[#f2f2f2] text-[3px] leading-[5px] text-[#222]" style={at(1438, 879, 188)}>
      <colgroup>
        <col className="w-[36px]" /><col className="w-[31px]" /><col className="w-[90px]" /><col className="w-[31px]" />
      </colgroup>
      <thead>
        <tr className="h-[13px]">
          {["Status Change", "SMS", "Email", "Push Notification"].map((t) => (
            <th key={t} scope="col" className={cell + " whitespace-nowrap font-bold"}>{t}</th>
          ))}
        </tr>
      </thead>
      <tbody>
        {STATUS_ROWS.map((r) => (
          <tr key={r.name} className={r.h}>
            <td className={cell}>
              <div className="flex h-full flex-col">
                <span>{r.name}</span>
                <span className={"flex h-[16px] items-center justify-center rounded-[2px] bg-[#161616] text-[#bbb] " + (r.name === "Shipped" ? "mt-3" : "mt-1")}>{r.name}</span>
              </div>
            </td>
            <td className={cell}>
              <div className="flex flex-col gap-px">
                {Array.from({ length: r.sms }, (_, i) => <i key={i} className="h-px bg-[#bdbdbd]" style={{ width: r.sms === 1 ? 4 : 28 - ((i * 5) % 9) }} />)}
              </div>
            </td>
            <td className={cell}>
              <div className="flex flex-col gap-1">
                {r.email.map((w, i) => <i key={i} className="h-px bg-[#c2c2c2]" style={{ width: w }} />)}
              </div>
            </td>
            <td className={cell}>
              <div className="flex flex-col gap-px">
                {Array.from({ length: r.push }, (_, i) => <i key={i} className="h-px bg-[#bdbdbd]" style={{ width: r.push === 1 ? 4 : 28 - i * 8 }} />)}
              </div>
            </td>
          </tr>
        ))}
      </tbody>
    </table>
  );
}

function RoleTable() {
  const cell = "h-[18px] border border-[#a3a3a3] p-px align-top text-left font-semibold";
  return (
    <table className="absolute table-fixed border-collapse text-[4px] leading-[5px] text-[#333]" style={at(1198, 967, 100)}>
      <thead>
        <tr>
          <th scope="col" className={cell}>ROLE</th>
          <th scope="col" className={cell}>PERMITTED ACTIONS</th>
          <td className={cell} />
        </tr>
      </thead>
      <tbody>
        {[0, 1].map((r) => (
          <tr key={r}><td className={cell} /><td className={cell} /><td className={cell} /></tr>
        ))}
      </tbody>
    </table>
  );
}

/* ---------- comment markers ---------- */
const MARKERS = [
  { x: 644, y: 904, n: 1, red: true }, { x: 540, y: 969, n: 1 }, { x: 659, y: 965, n: 1 }, { x: 602, y: 1024, n: 1, red: true },
  { x: 692, y: 976, red: true }, { x: 765, y: 967, n: 1, red: true }, { x: 759, y: 972, blue: true }, { x: 760, y: 970, n: 1 },
  { x: 819, y: 964, n: 1 }, { x: 785, y: 1016, n: 2 }, { x: 793, y: 1022, n: 1 }, { x: 1086, y: 959, n: 1 }, { x: 1587, y: 779, n: 1 },
];
function Marker({ m }) {
  const fill = m.red ? "#d25450" : m.blue ? "#4262ff" : "#f8cb42";
  return (
    <button type="button" aria-label="Comment thread" className="absolute" style={at(m.x, m.y)}>
      <svg viewBox="0 0 26 25" className="h-[25px] w-[26px] drop-shadow-sm" aria-hidden="true">
        <path d="M4 1h18a3 3 0 0 1 3 3v13a3 3 0 0 1-3 3h-6l-3 3.500L10 20H4a3 3 0 0 1-3-3V4a3 3 0 0 1 3-3z" fill={fill} stroke="#fff" strokeWidth="2" />
        <path d="M7.500 8h11M7.500 13h11" stroke="#fff" strokeWidth="2" />
      </svg>
      {m.n && (
        <span className="absolute -right-2 -top-[10px] flex size-4 items-center justify-center rounded-full bg-[#c83a32] font-['Open_Sans',sans-serif] text-[10px] font-bold leading-none text-white">
          {m.n}
        </span>
      )}
    </button>
  );
}

const BACK_LINKS = [[522, 1074], [678, 1068], [830, 1067]];

function Board() {
  return (
    <div className="absolute inset-0 overflow-hidden bg-[#f1f1f2] bg-[linear-gradient(to_right,#e7e7e8_1px,transparent_1px),linear-gradient(to_bottom,#e7e7e8_1px,transparent_1px)] bg-size-[151px_151px] bg-position-[108px_65px] font-['Open_Sans','Noto_Sans',sans-serif]">
      <SideNotes />
      <div className="absolute bg-white" style={at(526, 306, 337, 566)} />
      <div className="absolute bg-[#e9f6f3] mix-blend-multiply" style={at(863, 265, 337, 607)} />
      <div className="absolute bg-[#fefbe7] mix-blend-multiply" style={at(1200, 265, 522, 607)} />
      <FlowMap />
      <RoleTable />
      <StatusComms />
      <ViewMaps />
      {HEADINGS.map((h) => (
        <h2 key={h.text} className={"absolute whitespace-nowrap leading-[34px] text-[#1c1c1c] " + h.cls} style={at(h.x, h.y)}>{h.text}</h2>
      ))}
      {LISTS.map((l, i) => <BoardList key={i} list={l} />)}
      {SUBHEADINGS.map((h) => (
        <h3 key={h.text} className="absolute whitespace-nowrap text-[16px] font-semibold leading-[20px] text-[#1c1c1c]" style={at(h.x, h.y)}>{h.text}</h3>
      ))}
      {BACK_LINKS.map(([x, y]) => (
        <a key={x} href="#contents" className="absolute whitespace-nowrap text-[14px] leading-[19px] text-[#4a7df0] underline decoration-1" style={at(x, y)}>BACK TO CONTENTS</a>
      ))}
      <div className="absolute flex items-center justify-center bg-linear-to-b from-[#9ccb7b] to-[#a8d78a] text-center text-[16px] leading-[22px] text-[#242424] shadow-[0_10px_9px_-5px_rgba(0,0,0,0.45)]" style={at(1529, 506, 190, 103)}>
        <p className="whitespace-pre-line pb-[6px]">{"NOTE:\nALL Communications\nGo into logs or leave\nautomatic notes"}</p>
      </div>
      <div className="absolute flex items-center justify-center bg-linear-to-b from-[#fcf3b1] to-[#fff8c4] text-center text-[20px] leading-[29px] text-[#242424] shadow-[0_3px_5px_-2px_rgba(0,0,0,0.4)]" style={at(1528, 310, 193, 195)}>
        <p className="whitespace-pre-line pb-3">{"Splitting of\norders for MVP\nfor effective\ncomm selection\nmay be required"}</p>
      </div>
      <div className="absolute flex items-center justify-center bg-[#e17c86] text-center text-[13px] leading-[17px] text-[#242424] shadow-[0_3px_4px_-1px_rgba(0,0,0,0.4)]" style={at(424, 880, 43, 43)}>
        <p className="whitespace-pre-line pb-1">{"IM1\nFLOW"}</p>
      </div>
      {MARKERS.map((m, i) => <Marker key={i} m={m} />)}
    </div>
  );
}

/* ---------- application chrome ---------- */
const TOOLS = [
  ["Select", Cursor], ["Templates", Templates], ["Text", TextTool], ["Sticky note", Sticky], ["Shapes", Shapes], ["Connection line", Arrow],
  ["Pen", Pen], ["Comment", Comment], ["Frame", Frame], ["Upload", Upload], ["More tools", More],
];
const PANEL = "rounded-[4px] bg-white shadow-[0_2px_8px_rgba(5,0,56,0.08)]";

function TitleBar() {
  return (
    <header className="relative flex h-[29px] items-center justify-center border-t border-[#6f6e6e] bg-[#3c393a]">
      <div className="absolute left-2 flex gap-[7px]">
        <button type="button" aria-label="Close" className="size-3 rounded-full bg-[#ec6a5e]" />
        <button type="button" aria-label="Minimise" className="size-3 rounded-full bg-[#f4bf4f]" />
        <button type="button" aria-label="Zoom" className="size-3 rounded-full bg-[#61c554]" />
      </div>
      <h1 className="pb-[3px] font-['Inter',sans-serif] text-[13px] font-semibold leading-none text-[#b9b7b8]">Miro</h1>
    </header>
  );
}

function Tabs() {
  return (
    <nav className="flex h-[23px] bg-[#d1ced1] font-['Liberation_Sans',sans-serif] text-[12px] leading-none" aria-label="Tabs">
      <button type="button" className="w-[194px] border-b border-r border-[#b4b3b4] bg-[#dfdfdf] text-[#6a6a6a]">Boards</button>
      <div className="relative flex w-[193px] items-center justify-center bg-[#f1f1f1] text-[#3b3b3b]">
        <button type="button">SOH Business Processes</button>
        <button type="button" aria-label="Close tab" className="absolute right-[7px] text-[#8c8c8c]">
          <svg viewBox="0 0 8 8" className="size-2" stroke="currentColor" fill="none" aria-hidden="true"><path d="m0 0 8 8M8 0 0 8" /></svg>
        </button>
      </div>
      <div className="flex-1 border-b border-l border-[#b4b3b4]" />
    </nav>
  );
}

function TopBar() {
  return (
    <div className="flex items-start justify-between py-2 pl-2 pr-2 text-[#050038]">
      <div className={"flex h-[46px] items-center " + PANEL}>
        <a href="#home" className="pl-[15px] pr-[15px] pb-1 font-['Lato',sans-serif] text-[31px] font-bold leading-none">miro</a>
        <span className="h-6 w-px bg-[#e1e0e7]" />
        <button type="button" className="px-[15px] font-['Inter',sans-serif] text-[16px] font-medium">SOH Business Processes</button>
        <span className="h-6 w-px bg-[#e1e0e7]" />
        <div className="flex items-center gap-[15px] pl-[10px] pr-[14px]">
          <ToolButton label="Settings"><Gear /></ToolButton>
          <ToolButton label="Export"><Export /></ToolButton>
          <ToolButton label="Search"><Search /></ToolButton>
          <ToolButton label="Apps"><Plug /></ToolButton>
        </div>
      </div>
      <div className="flex gap-2">
        <div className={"flex h-[46px] items-center gap-[15px] pl-[10px] pr-4 " + PANEL}>
          <ToolButton label="Collapse" className="-mr-[5px] text-[#8f8da6]"><Chevron /></ToolButton>
          <ToolButton label="Estimation"><Estimate /></ToolButton>
          <ToolButton label="Presentation"><Present /></ToolButton>
          <ToolButton label="Notes"><Note /></ToolButton>
          <ToolButton label="Show more"><DoubleDown /></ToolButton>
        </div>
        <div className={"flex h-[46px] items-center gap-[15px] pl-4 pr-4 " + PANEL}>
          <ToolButton label="Hide cursors" className="text-[#4262ff]"><CursorLines /></ToolButton>
          <ToolButton label="Reactions"><Party /></ToolButton>
          <ToolButton label="Your profile" className="size-7 rounded-full border-[3px] border-[#f6cd45] bg-[#6b7089] text-[8px] font-bold text-[#d8d9e0]">N</ToolButton>
          <ToolButton label="Notifications"><Bell /></ToolButton>
          <button type="button" className="flex h-8 w-[76px] items-center justify-center gap-[6px] rounded-[4px] bg-[#4262ff] font-['Open_Sans',sans-serif] text-[12px] font-bold text-white">
            <Globe />
            Share
          </button>
        </div>
      </div>
    </div>
  );
}

export default function App() {
  return (
    <div className="flex min-h-screen bg-white px-[90px] pb-[108px] pt-[72px]">
      <main className="flex flex-1 flex-col overflow-hidden rounded-[10px] shadow-[0_0_0_1px_rgba(0,0,0,0.45),0_24px_50px_6px_rgba(0,0,0,0.55)]">
        <TitleBar />
        <Tabs />
        <section className="relative flex flex-1 flex-col" aria-label="Board">
          <Board />
          <div className="relative flex flex-1 flex-col">
            <TopBar />
            <div className="flex flex-1 flex-col items-start justify-center gap-2 pb-[6px] pl-2 text-[#050038]">
              <div className={"flex flex-col py-[11px] " + PANEL}>
                {TOOLS.map(([label, Glyph], i) => (
                  <ToolButton key={label} label={label} className={"h-[39px] w-[46px]" + (i === 0 ? " text-[#4262ff]" : "")}><Glyph /></ToolButton>
                ))}
              </div>
              <div className={"flex flex-col py-[2px] " + PANEL}>
                <ToolButton label="Undo" className="h-[43px] w-[46px]"><Undo /></ToolButton>
                <ToolButton label="Redo" className="h-[43px] w-[46px] text-[#8f8da6]"><Redo /></ToolButton>
              </div>
            </div>
            <div className="flex items-end justify-between pb-2 pl-2 pr-2 text-[#050038]">
              <ToolButton label="Open frames panel" className={"size-[39px] " + PANEL}><PanelIcon /></ToolButton>
              <div className={"flex h-[39px] items-center pl-[11px] pr-2 " + PANEL}>
                <ToolButton label="Zoom out"><Icon><path d="M5.500 12h13" /></Icon></ToolButton>
                <span className="w-[54px] text-center font-['Open_Sans',sans-serif] text-[12px] font-semibold">&lt;1%</span>
                <ToolButton label="Zoom in"><Icon><path d="M5.500 12h13M12 5.500v13" /></Icon></ToolButton>
                <ToolButton label="Help" className="ml-[14px] size-7 rounded-full bg-[#080808] font-['Open_Sans',sans-serif] text-[20px] font-bold leading-none text-white">?</ToolButton>
              </div>
            </div>
          </div>
          <div className="absolute right-[2px] top-2 h-[557px] w-[5px] rounded-full bg-[#adadad]" />
          <div className="absolute bottom-[2px] left-[633px] right-2 h-[5px] rounded-full bg-[#a8a8a8]" />
        </section>
      </main>
    </div>
  );
}
